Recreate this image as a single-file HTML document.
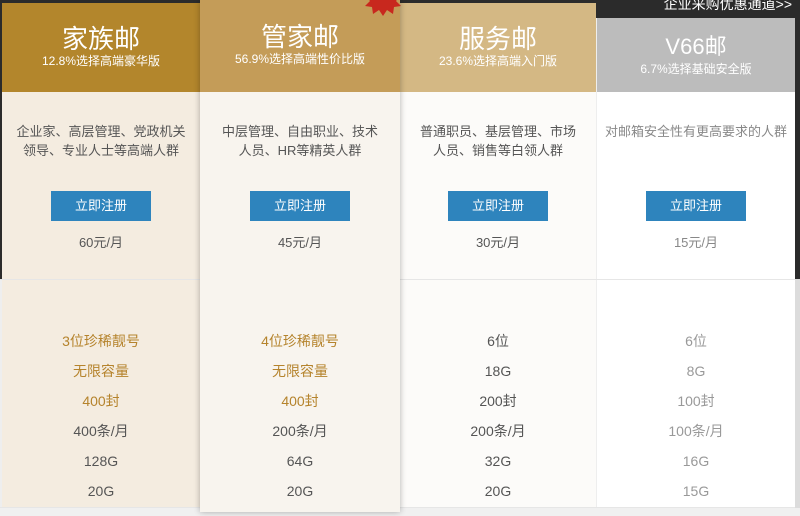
<!DOCTYPE html>
<html><head><meta charset="utf-8"><style>
*{margin:0;padding:0;box-sizing:border-box}
body{width:800px;height:516px;overflow:hidden;background:#2b2b2b;font-family:"Liberation Sans","Noto Sans CJK SC",sans-serif;position:relative}
.top{position:absolute;right:8px;top:-6px;color:#fff;font-size:14px}
.col{position:absolute;text-align:center}
.hd{position:absolute;left:0;right:0;bottom:auto;color:#fff}
.t{font-size:26px;line-height:30px}
.s{font-size:12px;line-height:14px}
.body{position:absolute;left:0;right:0;top:92px;bottom:0}
.desc{position:absolute;left:0;right:0;top:30px;font-size:13px;line-height:19px;color:#555}
.btn{position:absolute;left:50%;margin-left:-50px;top:99px;width:100px;height:30px;background:#2e84bd;color:#fff;font-size:13px;line-height:30px}
.price{position:absolute;left:0;right:0;top:140px;font-size:13px;color:#555}
.f{position:absolute;left:0;right:0;top:234px;font-size:14px;line-height:30px;color:#555}
.g{color:#b5832c}
.line{position:absolute;left:0;width:795px;height:1px;background:#e6e6e6}
</style></head><body>
<div class="top">企业采购优惠通道&gt;&gt;</div>
<div style="position:absolute;left:0;top:279px;width:2px;height:237px;background:#eee"></div>
<div style="position:absolute;right:0;top:279px;width:5px;height:237px;background:#dcdcdc"></div>
<div style="position:absolute;left:0;top:508px;width:800px;height:8px;background:#f0f0f0"></div>

<div class="col" style="left:2px;top:3px;width:198px;height:505px;background:#f4ece0">
 <div class="hd" style="top:0;height:89px;background:#b3862c"><div class="t" style="margin-top:21px">家族邮</div><div class="s">12.8%选择高端豪华版</div></div>
 <div class="body" style="top:89px"><div class="desc">企业家、高层管理、党政机关<br>领导、专业人士等高端人群</div><div class="btn">立即注册</div><div class="price">60元/月</div>
 <div class="f"><div class="g">3位珍稀靓号</div><div class="g">无限容量</div><div class="g">400封</div><div>400条/月</div><div>128G</div><div>20G</div></div></div>
</div>

<div class="col" style="left:400px;top:3px;width:196px;height:505px;background:#fcfbf9">
 <div class="hd" style="top:0;height:89px;background:#d4b884"><div class="t" style="margin-top:21px">服务邮</div><div class="s">23.6%选择高端入门版</div></div>
 <div class="body" style="top:89px"><div class="desc">普通职员、基层管理、市场<br>人员、销售等白领人群</div><div class="btn">立即注册</div><div class="price">30元/月</div>
 <div class="f"><div>6位</div><div>18G</div><div>200封</div><div>200条/月</div><div>32G</div><div>20G</div></div></div>
</div>

<div class="col" style="left:596px;top:18px;width:199px;height:490px;background:#fff;border-left:1px solid #eee">
 <div class="hd" style="top:0;height:74px;background:#bcbcbc"><div class="t" style="margin-top:14px;font-size:22px">V66邮</div><div class="s">6.7%选择基础安全版</div></div>
 <div class="body" style="top:74px"><div class="desc" style="color:#888">对邮箱安全性有更高要求的人群</div><div class="btn">立即注册</div><div class="price" style="color:#888">15元/月</div>
 <div class="f" style="color:#999"><div>6位</div><div>8G</div><div>100封</div><div>100条/月</div><div>16G</div><div>15G</div></div></div>
</div>

<div class="line" style="top:279px"></div>
<div class="line" style="top:507px"></div>

<div class="col" style="left:200px;top:0;width:200px;height:512px;background:#f8f4ee;box-shadow:0 0 6px rgba(0,0,0,.3)">
 <div class="hd" style="top:0;height:92px;background:#c49c58"><div class="t" style="margin-top:22px">管家邮</div><div class="s">56.9%选择高端性价比版</div></div>
 <div class="body" style="top:92px"><div class="desc">中层管理、自由职业、技术<br>人员、HR等精英人群</div><div class="btn">立即注册</div><div class="price">45元/月</div>
 <div class="f"><div class="g">4位珍稀靓号</div><div class="g">无限容量</div><div class="g">400封</div><div>200条/月</div><div>64G</div><div>20G</div></div></div>
 <svg style="position:absolute;left:163px;top:-12px" width="40" height="30" viewBox="0 0 40 30"><polygon points="20,0 24,5 30,2 30,8 37,8 33,13 38,18 31,19 30,26 24,22 20,28 16,22 10,26 9,19 2,18 7,13 3,8 10,8 10,2 16,5" fill="#c8281e"/></svg>
</div>
</body></html>
